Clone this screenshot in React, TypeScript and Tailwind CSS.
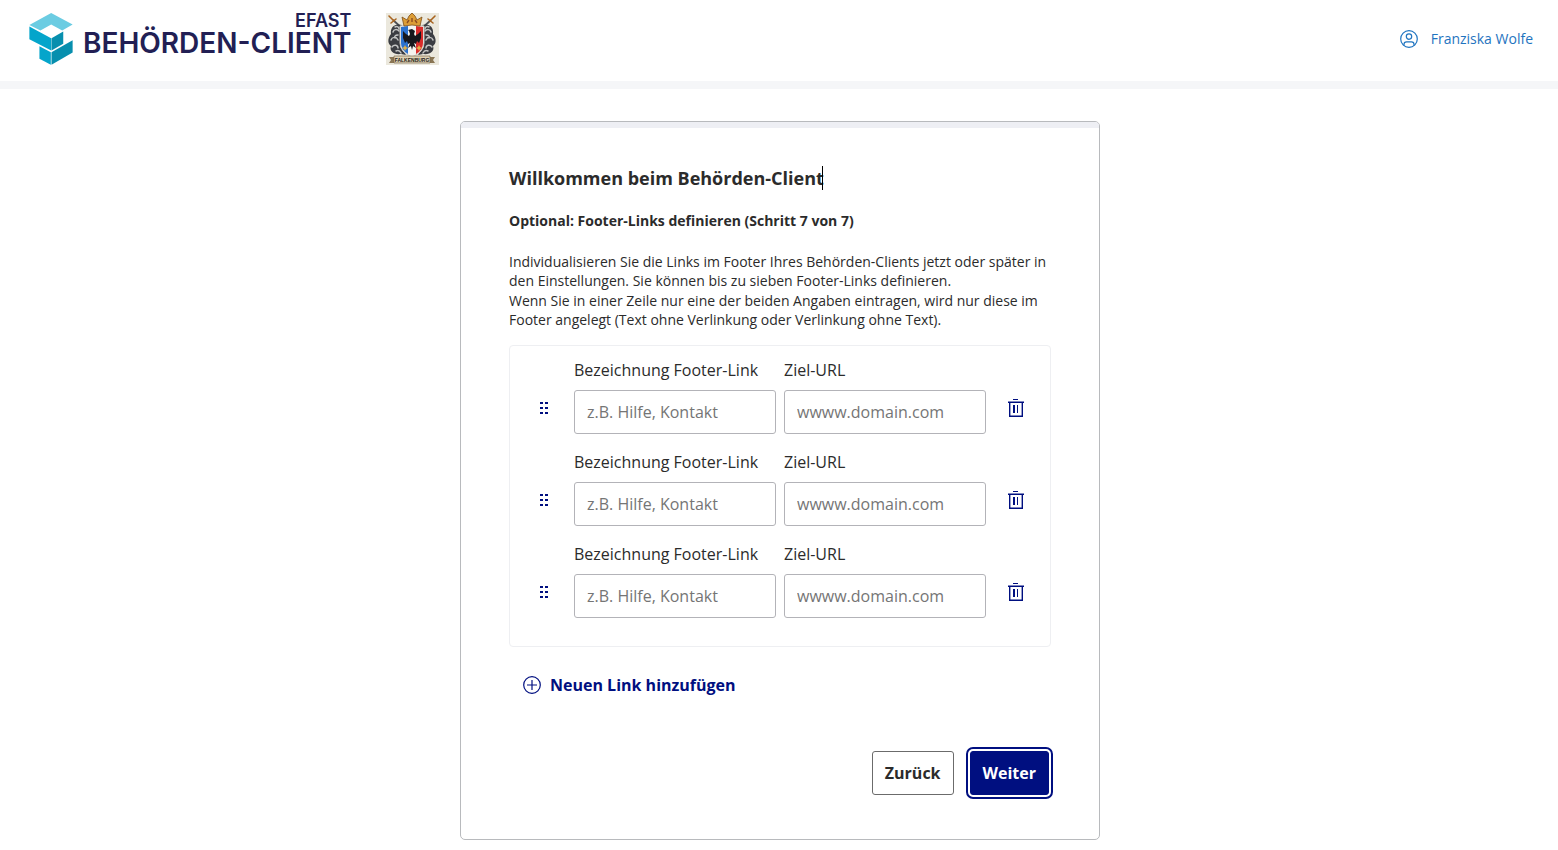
import { useId, useState } from 'react';

const INITIAL_ROWS = [1, 2, 3];

function CubeLogo() {
  return (
    <svg viewBox="0 0 131 158" className="h-[53px] w-[44px] shrink-0" aria-hidden="true">
      <path d="M1 39 66 3l64 34-31 18-33-18-32 18z" fill="#6bcce2" />
      <path d="M1 43l65 35v37L1 81z" fill="#04a5cb" />
      <path d="M67 78l35-20v37l-35 20z" fill="#078fae" />
      <path d="M31 102l34 18v37l-34-18z" fill="#04a5cb" />
      <path d="M67 120l63-36v37l-63 36z" fill="#078fae" />
    </svg>
  );
}

function Crest() {
  return (
    <svg viewBox="0 0 53 52" className="h-[52px] w-[53px] shrink-0" role="img" aria-label="Wappen Falkenburg">
      <rect width="53" height="52" fill="#ebe8dd" />
      {/* swords */}
      <g stroke="#4c4f55" strokeWidth="1.8">
        <path d="M7 7 18 17M45 7 34 17" />
      </g>
      <g stroke="#a9641f" strokeWidth="1.6" strokeLinecap="round">
        <path d="M3 3l5 5M49 3l-5 5M5 10l5-4M47 10l-5-4" />
      </g>
      {/* mantling */}
      <g fill="#3b3d42">
        <path d="M16 12C9 10 4 14 5 21c-4 5-3 10 0 12-2 5 3 9 10 8l5 1-5-8z" />
        <path d="M36 12c7-2 12 2 11 9 4 5 3 10 0 12 2 5-3 9-10 8l-5 1 5-8z" />
      </g>
      <g fill="none" stroke="#c4c5c4" strokeWidth="1.5" strokeLinecap="round">
        <path d="M9 14c2-1 4 0 4 2M7 19c1-3 4-3 6-1M5 27c1-3 5-4 7 0M12 22c-3 0-4 2-3 3M6 34c2-3 6-2 6 1M10 38c2-1 4 0 5 2" />
        <path d="M43 14c-2-1-4 0-4 2M45 19c-1-3-4-3-6-1M47 27c-1-3-5-4-7 0M40 22c3 0 4 2 3 3M46 34c-2-3-6-2-6 1M42 38c-2-1-4 0-5 2" />
      </g>
      {/* shield */}
      <path d="M14 13q12-3 24 0v17q0 9-12 14-12-5-12-14z" fill="#f4f3ef" stroke="#c9c7c0" />
      <path d="M15 14l7-1v28q-7-4-7-11z" fill="#2b72cf" />
      <path d="M30 13l7 1v16q0 7-7 11z" fill="#d92c2b" />
      {/* eagle */}
      <path
        d="M26 16l3 2-1 3 1 2 3-2 3-3v7l-2 5-2-2-1 3-2-1 2 5-3-2-1 4-1-4-3 2 2-5-2 1-1-3-2 2-2-5v-7l3 3 3 2 1-2-1-3-1-1z"
        fill="#17181d"
      />
      <path d="M19 32l1 2 2 1-2 1-1 2-1-2-2-1 2-1zM33 32l1 2 2 1-2 1-1 2-1-2-2-1 2-1z" fill="#e0b04a" />
      {/* crown */}
      <path d="M16 4l5 3 2-4 3-3 3 3 2 4 5-3-2 9q-8-2-16 0z" fill="#dc9d36" stroke="#7f4e17" strokeWidth=".8" />
      <path d="M21 10l2-3M26 9V5M31 10l-2-3" stroke="#8d4d22" strokeWidth="1.4" />
      {/* banner */}
      <path d="M3 44h7v6H3l2-3zM49 44h-7v6h7l-2-3z" fill="#8a7654" />
      <path d="M8 43h36v7H8z" fill="#ded2b6" stroke="#7d6c4e" strokeWidth=".7" />
      <text x="26" y="48.6" textAnchor="middle" fontSize="5" fontWeight="700" fontFamily="'Liberation Sans', sans-serif" fill="#1f1c17">
        FALKENBURG
      </text>
    </svg>
  );
}

function UserIcon() {
  return (
    <svg viewBox="0 0 18 18" className="size-[18px]" fill="none" stroke="currentColor" strokeWidth="1.2" aria-hidden="true">
      <circle cx="9" cy="9" r="8.3" />
      <circle cx="9" cy="6.6" r="2.7" />
      <path d="M4 15.4v-1.2q0-2.4 2.5-2.4h5q2.5 0 2.5 2.4v1.2" />
    </svg>
  );
}

function TrashIcon() {
  return (
    <svg viewBox="0 0 16 18" className="h-[18px] w-4" fill="currentColor" aria-hidden="true">
      <path d="M5 0h5v1H5zM0 2.6h16V4H0zM1 4h1.4v12.6h11.2V4H15v14H1zM5 6h2v8H5zM9 6h1v8H9z" />
    </svg>
  );
}

function GripIcon() {
  return (
    <svg viewBox="0 0 8 12" className="h-3 w-2" fill="currentColor" aria-hidden="true">
      <path d="M0 0h3v2H0zM5 0h3v2H5zM0 5h3v2H0zM5 5h3v2H5zM0 10h3v2H0zM5 10h3v2H5z" />
    </svg>
  );
}

interface TextFieldProps {
  label: string;
  placeholder: string;
}

function TextField({ label, placeholder }: TextFieldProps) {
  const id = useId();
  return (
    <div className="flex min-w-0 flex-1 flex-col gap-2">
      <label htmlFor={id} className="whitespace-nowrap text-base">{label}</label>
      <input
        id={id}
        type="text"
        placeholder={placeholder}
        className="h-11 w-full rounded-[3px] border border-[#b3b3b8] bg-white px-3 text-base placeholder:text-[#757575]"
      />
    </div>
  );
}

function LinkRow({ onRemove }: { onRemove: () => void }) {
  return (
    <li className="flex items-center">
      <button type="button" aria-label="Zeile verschieben" className="flex w-16 shrink-0 cursor-grab justify-center pl-1 pt-6 text-[#000f80]">
        <GripIcon />
      </button>
      <div className="flex min-w-0 flex-1 gap-2">
        <TextField label="Bezeichnung Footer-Link" placeholder="z.B. Hilfe, Kontakt" />
        <TextField label="Ziel-URL" placeholder="wwww.domain.com" />
      </div>
      <button type="button" aria-label="Zeile löschen" onClick={onRemove} className="flex w-16 shrink-0 justify-center pr-1 pt-6 text-[#000f80]">
        <TrashIcon />
      </button>
    </li>
  );
}

export default function App() {
  const [rows, setRows] = useState(INITIAL_ROWS);

  const addRow = () => setRows(prev => (prev.length < 7 ? [...prev, Math.max(0, ...prev) + 1] : prev));
  const removeRow = (id: number) => setRows(prev => prev.filter(row => row !== id));

  return (
    <div className="bg-white pb-2 font-['Open_Sans','Noto_Sans',sans-serif] text-[#2b2b2b]">
      <header className="flex items-center justify-between border-b-8 border-[#f5f6f8] pb-4 pl-[29px] pr-[25px] pt-3">
        <div className="flex items-start">
          <CubeLogo />
          <div className="ml-[10px] flex flex-col items-end whitespace-nowrap font-['Inter',sans-serif] font-semibold text-[#221f54]">
            <span className="text-lg leading-[17px]">EFAST</span>
            <span className="text-[28px] leading-7">BEHÖRDEN-CLIENT</span>
          </div>
          <div className="ml-[35px] pt-px">
            <Crest />
          </div>
        </div>
        <a href="#profil" className="flex items-center gap-[13px] text-sm text-[#1f74c0]">
          <UserIcon />
          Franziska Wolfe
        </a>
      </header>

      <div className="pl-0.5 pt-8">
        <main className="mx-auto w-full max-w-[640px] overflow-hidden rounded-[5px] border border-[#b8babd]">
          <div className="h-1.5 bg-[#eeeff4]" />
          <div className="px-12 pb-11 pt-[38px]">
            <h1 className="flex items-center text-lg leading-6 font-bold">
              Willkommen beim Behörden-Client
              <span className="-ml-0.5 h-6 w-px bg-black" />
            </h1>
            <h2 className="mt-[21px] text-sm font-bold">Optional: Footer-Links definieren (Schritt 7 von 7)</h2>
            <p className="mt-[21px] text-sm leading-[19px]">
              Individualisieren Sie die Links im Footer Ihres Behörden-Clients jetzt oder später in den Einstellungen. Sie können bis zu sieben Footer-Links definieren.
            </p>
            <p className="mt-px text-sm leading-[19px]">
              Wenn Sie in einer Zeile nur eine der beiden Angaben eintragen, wird nur diese im Footer angelegt (Text ohne Verlinkung oder Verlinkung ohne Text).
            </p>

            <ul className="mt-4 flex flex-col gap-4 rounded-[4px] border border-[#eeeff2] pb-7 pt-3">
              {rows.map(id => (
                <LinkRow key={id} onRemove={() => removeRow(id)} />
              ))}
            </ul>

            <button type="button" onClick={addRow} className="ml-3.5 mt-[26px] flex items-center gap-[9px] text-base font-bold text-[#000f80]">
              <svg viewBox="0 0 18 18" className="size-[18px]" fill="none" stroke="currentColor" strokeWidth="1.2" aria-hidden="true">
                <circle cx="9" cy="9" r="8.3" />
                <path d="M9 4v10M4 9h10" />
              </svg>
              Neuen Link hinzufügen
            </button>

            <div className="mt-[54px] flex justify-end gap-4 pr-0.5">
              <button type="button" className="h-11 rounded-[3px] border border-[#6b6b6b] px-3 text-base font-bold">
                Zurück
              </button>
              <button
                type="button"
                className="h-11 rounded-[3px] border border-[#000f80] bg-[#000f80] px-3 text-base font-bold text-white outline-2 outline-offset-2 outline-[#000f80]"
              >
                Weiter
              </button>
            </div>
          </div>
        </main>
      </div>
    </div>
  );
}
